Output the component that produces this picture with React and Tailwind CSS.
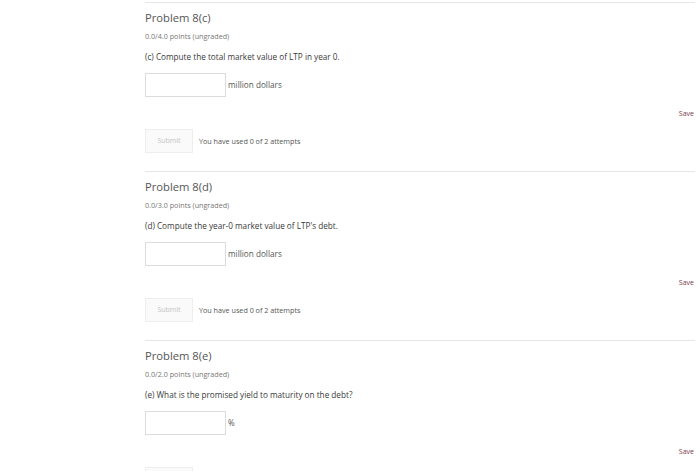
const problems = [
  {
    title: 'Problem 8(c)',
    points: '0.0/4.0 points (ungraded)',
    question: '(c) Compute the total market value of LTP in year 0.',
    unit: 'million dollars',
  },
  {
    title: 'Problem 8(d)',
    points: '0.0/3.0 points (ungraded)',
    question: "(d) Compute the year-0 market value of LTP's debt.",
    unit: 'million dollars',
  },
  {
    title: 'Problem 8(e)',
    points: '0.0/2.0 points (ungraded)',
    question: '(e) What is the promised yield to maturity on the debt?',
    unit: '%',
  },
];

const Problem = ({p}) => (
  <div className="border-t border-[#e6e6e6] pb-[18px]">
    <h2 className="pt-[7px] text-[11.2px] leading-[16px] text-[#555]">{p.title}</h2>
    <p className="mt-[5px] text-[7.2px] leading-[10px] text-[#777]">{p.points}</p>
    <p className="mt-[10px] text-[8.2px] leading-[12px] text-[#3a3a3a]">{p.question}</p>
    <div className="mt-[10px] flex items-center">
      <div className="h-[24px] w-[81px] border border-[#dcdcdc] bg-white" />
      <span className="ml-[2px] text-[8.2px] text-[#555]">{p.unit}</span>
    </div>
    <div className="mt-[12px] flex justify-end pr-[1px]">
      <span className="text-[7px] leading-[10px] text-[#7a3a4a]">Save</span>
    </div>
    <div className="mt-[10px] flex items-center">
      <div className="flex h-[24px] w-[48px] items-center justify-center border border-[#eeeeee] bg-[#fafafa] text-[7px] text-[#c4c4c4]">
        Submit
      </div>
      <span className="ml-[6px] text-[7.2px] text-[#555]">You have used 0 of 2 attempts</span>
    </div>
  </div>
);

export default function App() {
  return (
    <div
      className="h-[471px] overflow-hidden bg-white pl-[145px] pr-[5px] pt-[2px]"
      style={{fontFamily: '"Open Sans", sans-serif'}}>
      {problems.map(p => (
        <Problem key={p.title} p={p} />
      ))}
    </div>
  );
}
